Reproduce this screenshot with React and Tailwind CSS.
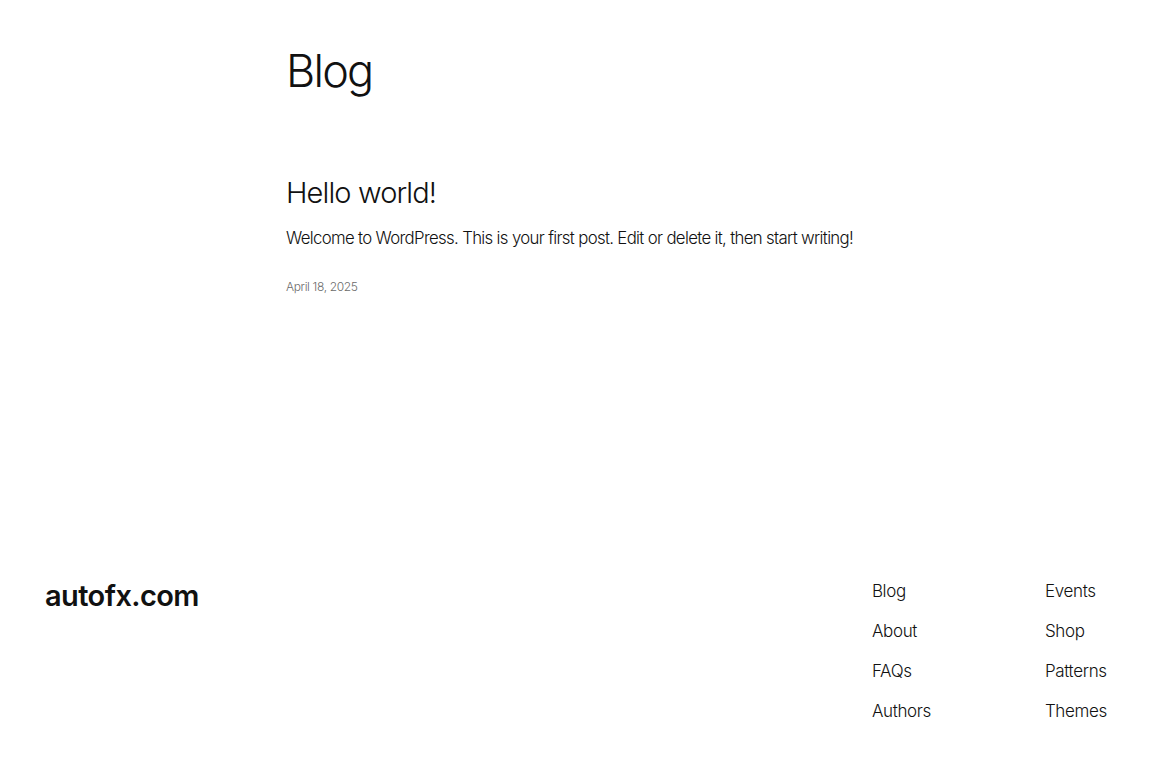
export default function App() {
  const navA = ["Blog", "About", "FAQs", "Authors"];
  const navB = ["Events", "Shop", "Patterns", "Themes"];

  return (
    <div className="min-h-[768px] bg-white text-[#111111] font-['Inter',sans-serif] flex flex-col">
      <main className="w-[645px] ml-[286px] pt-[44px]">
        <h1 className="text-[45px] leading-[1.2] font-light tracking-[-0.04em]">Blog</h1>
        <article className="mt-[78px]">
          <h2 className="text-[29px] leading-[1.2] font-light tracking-[-0.03em]">Hello world!</h2>
          <p className="mt-[14px] text-[16.8px] leading-[1.6] font-light tracking-[-0.04em] whitespace-nowrap">
            Welcome to WordPress. This is your first post. Edit or delete it, then start writing!
          </p>
          <p className="mt-[26px] text-[12px] text-[#6b6b6b] font-light tracking-[-0.03em]">April 18, 2025</p>
        </article>
      </main>

      <footer className="mt-auto px-[45px] pb-[45px] flex justify-between items-start">
        <a className="text-[29px] font-semibold tracking-[-0.02em] leading-none mt-[2px]">autofx.com</a>
        <nav className="grid grid-cols-[173px_auto] gap-y-[16px] text-[17px] font-light tracking-[-0.02em] leading-[24px]">
          {navA.map((a, i) => (
            <>
              <a key={a}>{a}</a>
              <a key={navB[i]}>{navB[i]}</a>
            </>
          ))}
        </nav>
      </footer>
    </div>
  );
}
